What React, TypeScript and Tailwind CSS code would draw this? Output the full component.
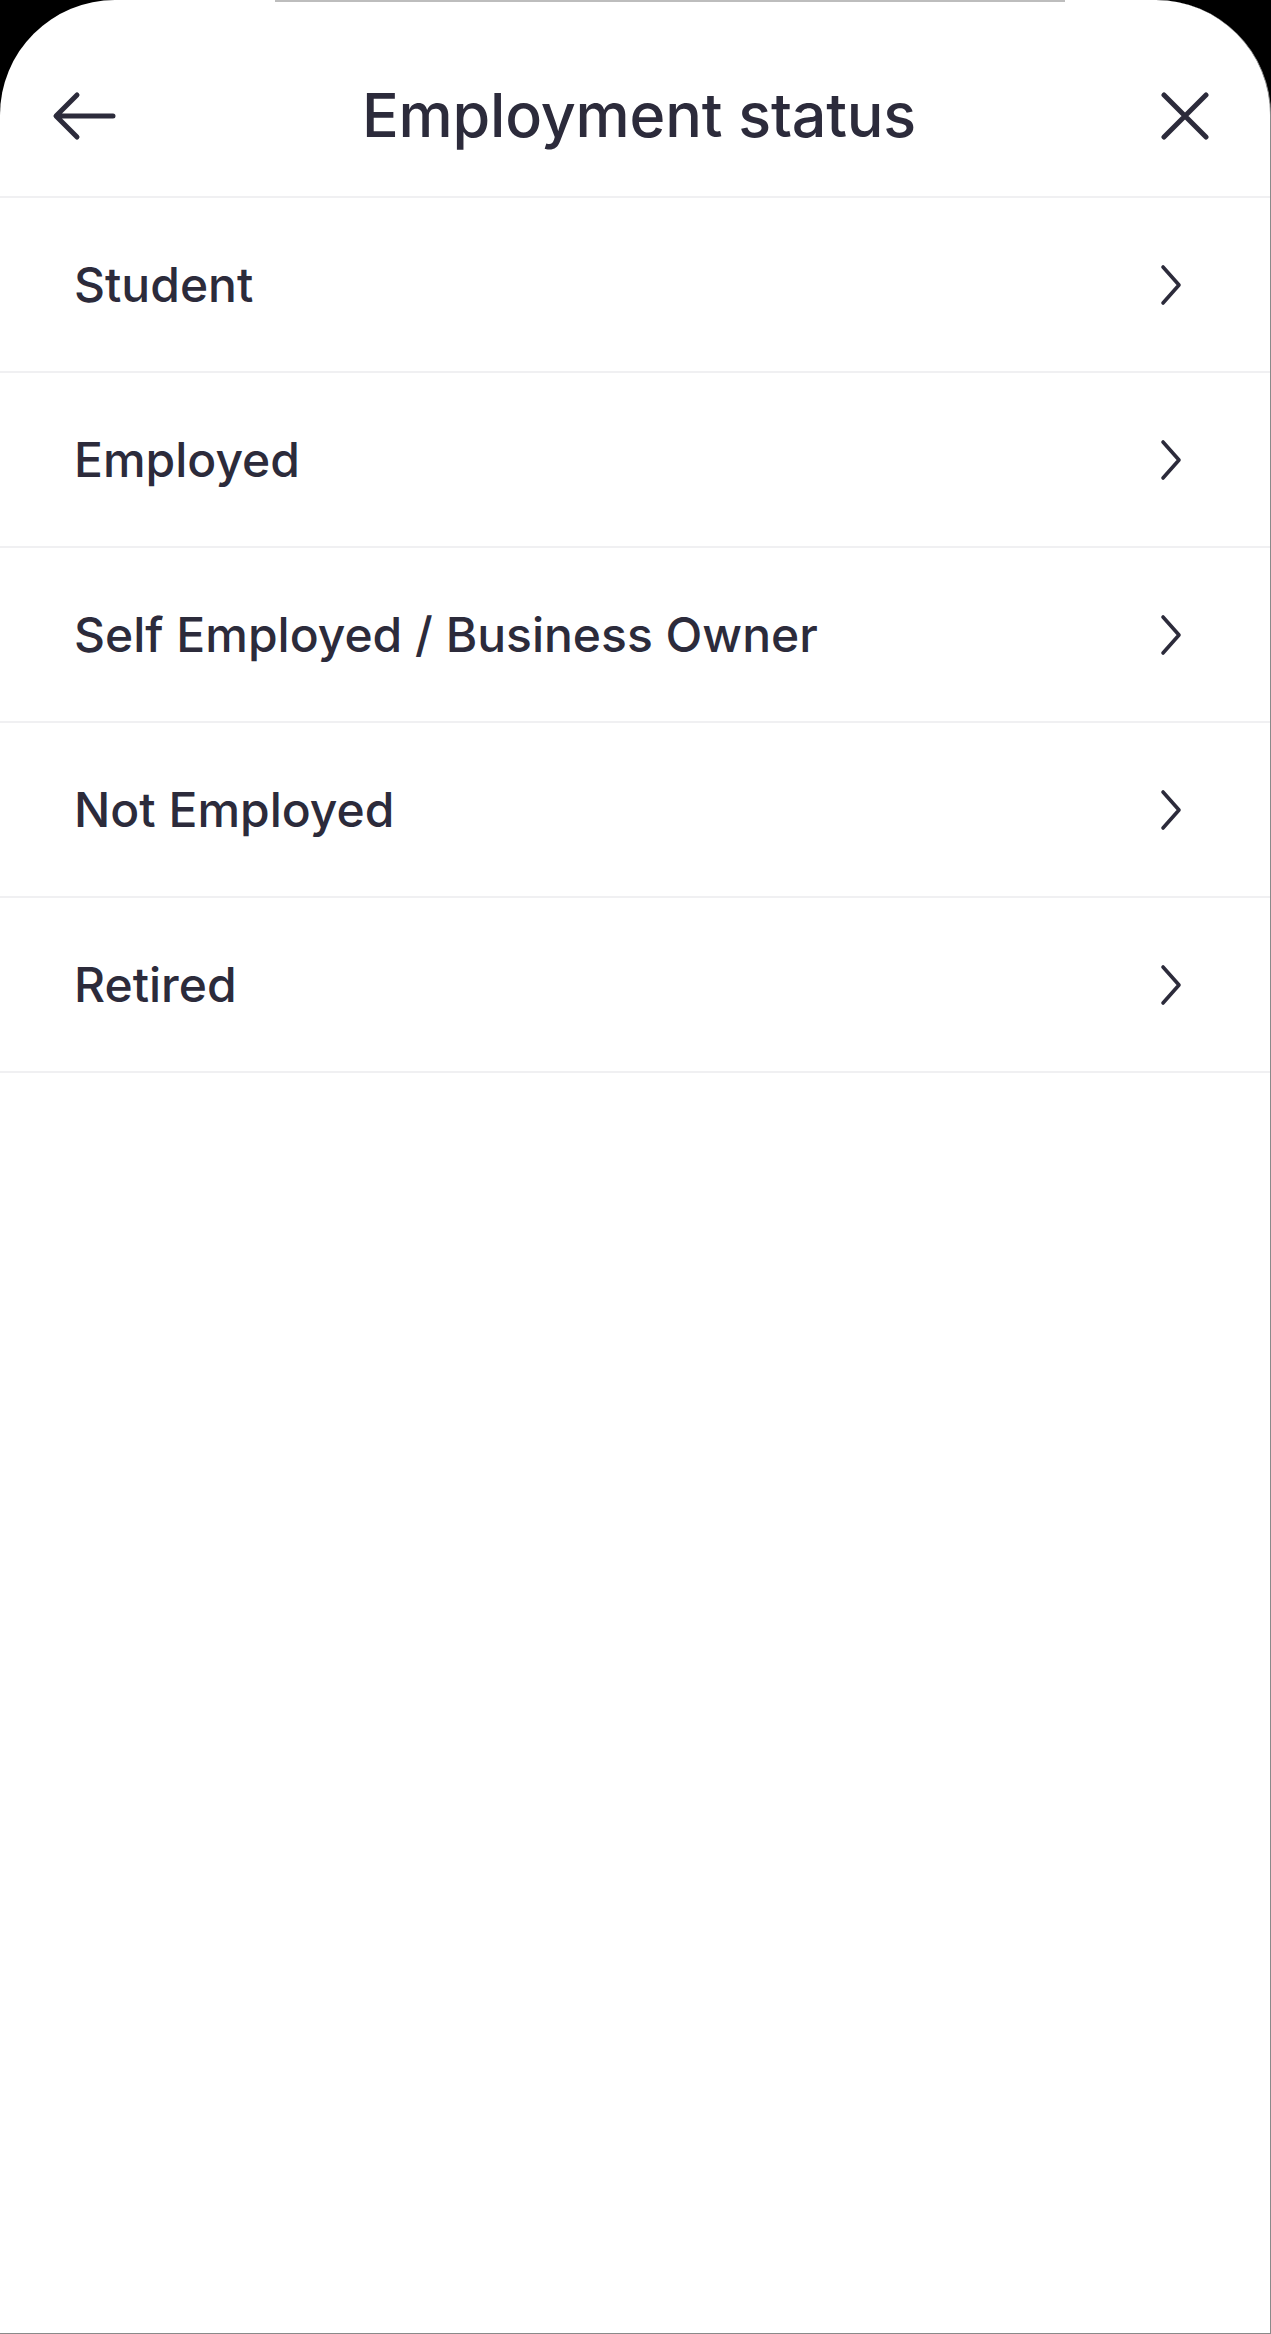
import React from "react";

const items = [
  "Student",
  "Employed",
  "Self Employed / Business Owner",
  "Not Employed",
  "Retired",
];

function Chevron() {
  return (
    <svg width="22" height="42" viewBox="0 0 22 42" fill="none" className="shrink-0">
      <path d="M3 3 L19 21 L3 39" stroke="#2c2b3b" strokeWidth="3.6" strokeLinecap="round" strokeLinejoin="round" />
    </svg>
  );
}

export default function App() {
  return (
    <div className="w-[1271px] h-[2334px] bg-black" style={{ fontFamily: "Inter, 'Noto Sans', sans-serif" }}>
      <div className="relative w-full h-full bg-white rounded-t-[115px] border-r border-b border-[#8a8a8a] overflow-hidden">
        <div className="absolute top-0 left-[275px] w-[790px] h-[2px] bg-[#bdbdbd]" />
        <header className="h-[198px] pt-[36px] flex items-center justify-between pl-[52px] pr-[60px] border-b-2 border-[#f0f0f2]">
          <svg width="66" height="52" viewBox="0 0 66 52" fill="none">
            <path d="M61 26 H6 M25 5 L4 26 L25 47" stroke="#2c2b3b" strokeWidth="5" strokeLinecap="round" strokeLinejoin="round" />
          </svg>
          <h1 className="text-[61px] font-medium text-[#2c2b3b] tracking-[-0.2px] leading-none pb-[2px]">Employment status</h1>
          <svg width="50" height="48" viewBox="0 0 50 48" fill="none">
            <path d="M4 3 L46 45 M46 3 L4 45" stroke="#2c2b3b" strokeWidth="5" strokeLinecap="round" />
          </svg>
        </header>
        <ul>
          {items.map((t) => (
            <li key={t} className="h-[175px] flex items-center justify-between pl-[74px] pr-[88px] border-b-2 border-[#f0f0f2]">
              <span className="text-[48px] font-medium text-[#2c2b3b] leading-none">{t}</span>
              <Chevron />
            </li>
          ))}
        </ul>
      </div>
    </div>
  );
}
